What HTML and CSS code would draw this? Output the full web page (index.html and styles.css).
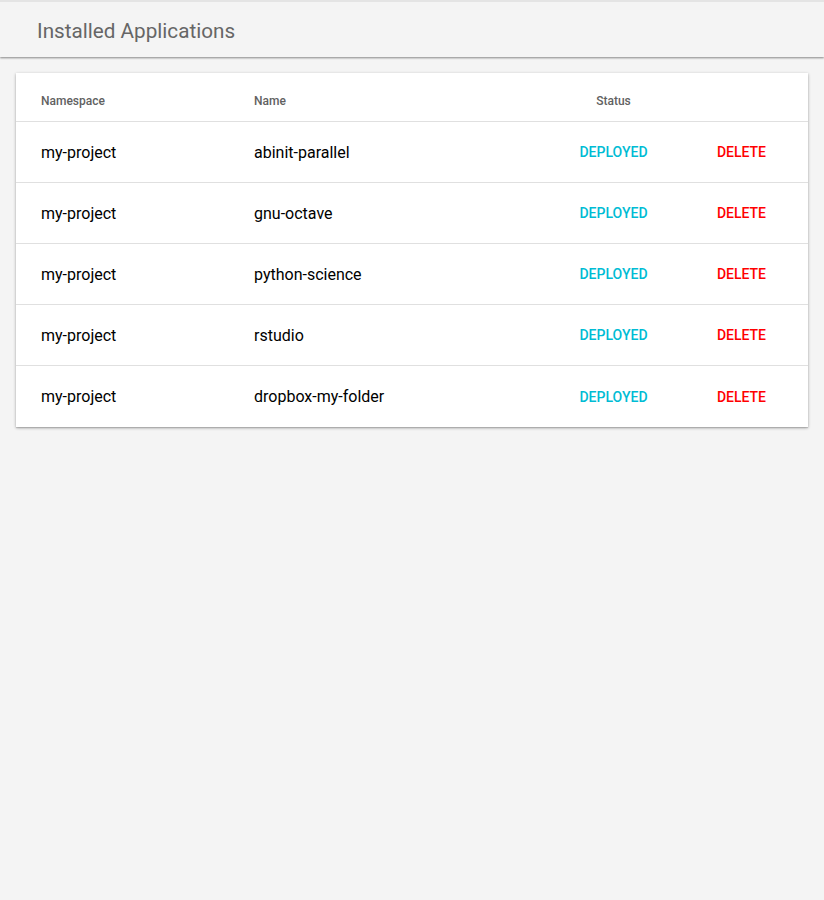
FILE: index.html
```html
<!DOCTYPE html>
<html>
<head>
<meta charset="utf-8">
<link rel="stylesheet" href="styles.css">
</head>
<body>
<header class="topbar">
  <h1 class="title">Installed Applications</h1>
</header>
<main class="content">
  <section class="card">
    <div class="row head">
      <div class="cell">Namespace</div>
      <div class="cell">Name</div>
      <div class="cell center">Status</div>
      <div class="cell"></div>
    </div>
    <div class="row">
      <div class="cell">my-project</div>
      <div class="cell">abinit-parallel</div>
      <div class="cell center status">DEPLOYED</div>
      <div class="cell center del">DELETE</div>
    </div>
    <div class="row">
      <div class="cell">my-project</div>
      <div class="cell">gnu-octave</div>
      <div class="cell center status">DEPLOYED</div>
      <div class="cell center del">DELETE</div>
    </div>
    <div class="row">
      <div class="cell">my-project</div>
      <div class="cell">python-science</div>
      <div class="cell center status">DEPLOYED</div>
      <div class="cell center del">DELETE</div>
    </div>
    <div class="row">
      <div class="cell">my-project</div>
      <div class="cell">rstudio</div>
      <div class="cell center status">DEPLOYED</div>
      <div class="cell center del">DELETE</div>
    </div>
    <div class="row">
      <div class="cell">my-project</div>
      <div class="cell">dropbox-my-folder</div>
      <div class="cell center status">DEPLOYED</div>
      <div class="cell center del">DELETE</div>
    </div>
  </section>
</main>
</body>
</html>
```
FILE: styles.css
```css
html, body {
  margin: 0;
  padding: 0;
  background: #f4f4f4;
  font-family: Roboto, "Liberation Sans", sans-serif;
}
.topbar {
  height: 55px;
  border-top: 2px solid #e4e4e4;
  background: #f4f4f4;
  box-shadow: 0 1px 2px rgba(0, 0, 0, 0.45);
  display: flex;
  align-items: center;
  padding-left: 37px;
  position: relative;
}
.title {
  margin: 2px 0 0 0;
  font-size: 20.7px;
  font-weight: 400;
  color: #666;
}
.content {
  padding: 16px 16px;
}
.card {
  background: #fff;
  box-shadow: 0 1px 3px rgba(0, 0, 0, 0.3), 0 1px 1px rgba(0, 0, 0, 0.12);
}
.row {
  display: grid;
  grid-template-columns: 213px 1fr 133px 123px;
  padding: 0 5px 0 25px;
  height: 60px;
  align-items: center;
  border-bottom: 1px solid #e0e0e0;
  font-size: 16px;
  color: #000;
}
.row:last-child {
  border-bottom: none;
  height: 61px;
}
.row.head {
  height: 49px;
  box-sizing: border-box;
  padding-top: 7px;
  font-size: 12px;
  font-weight: 500;
  color: #616161;
}
.center {
  text-align: center;
}
.status {
  color: #00bcd4;
  font-size: 14px;
  font-weight: 500;
}
.del {
  color: #ff0000;
  font-size: 14px;
  font-weight: 500;
}
```
